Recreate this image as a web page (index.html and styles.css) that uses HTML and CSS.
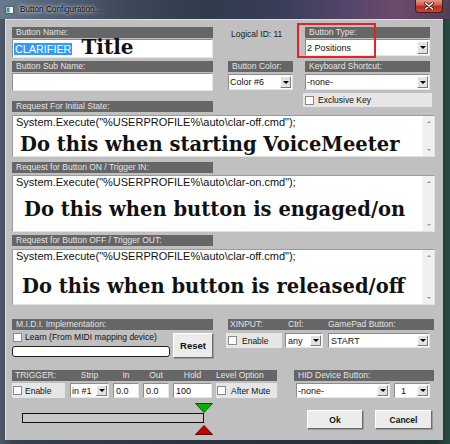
FILE: index.html
```html
<!DOCTYPE html>
<html>
<head>
<meta charset="utf-8">
<title>Button Configuration</title>
<link rel="stylesheet" href="styles.css">
</head>
<body>
<div class="window">
  <div class="titlebar">
    <svg class="app-icon" width="9" height="8" viewBox="0 0 9 8"><rect x="0.5" y="0.5" width="8" height="7" fill="#f2f2f2" stroke="#56606c"/><rect x="1.5" y="1.5" width="3" height="5" fill="#3a9c84"/></svg>
    <span class="title">Button Configuration...</span>
    <div class="close"><svg width="10" height="8" viewBox="0 0 10 8"><path d="M1.5 1 L8.5 7 M8.5 1 L1.5 7" stroke="#4a1010" stroke-width="3" stroke-linecap="round"/><path d="M1.5 1 L8.5 7 M8.5 1 L1.5 7" stroke="#ffffff" stroke-width="1.6" stroke-linecap="round"/></svg></div>
  </div>
  <div class="client">
    <div class="highlight"></div>
    <div class="top-grid">
      <div class="hdr g-name-h">Button Name:</div>
      <div class="field g-name"><span class="selected">CLARIFIER</span><span class="annot-title">Title</span></div>
      <div class="logical">Logical ID: 11</div>
      <div class="hdr g-type-h">Button Type:</div>
      <div class="select g-type"><span class="val">2 Positions</span><span class="drop"></span></div>
      <div class="hdr g-sub-h">Button Sub Name:</div>
      <div class="field g-sub"></div>
      <div class="hdr g-color-h">Button Color:</div>
      <div class="select g-color"><span class="val">Color #6</span><span class="drop"></span></div>
      <div class="hdr g-kb-h">Keyboard Shortcut:</div>
      <div class="select g-kb"><span class="val">-none-</span><span class="drop"></span></div>
      <div class="chk-cell g-excl"><span class="cb"></span>Exclusive Key</div>
      <div class="hdr g-req-h">Request For Initial State:</div>
    </div>

    <div class="textbox tb1">
      <div class="tb-content">
        <div class="cmd">System.Execute("%USERPROFILE%\auto\clar-off.cmd");</div>
        <div class="annot a1">Do this when starting VoiceMeeter</div>
      </div>
      <div class="scrollbar"><span class="sb-up"></span><span class="sb-down"></span></div>
    </div>

    <div class="hdr req-h h2">Request for Button ON / Trigger IN:</div>
    <div class="textbox tb2">
      <div class="tb-content">
        <div class="cmd">System.Execute("%USERPROFILE%\auto\clar-on.cmd");</div>
        <div class="annot a2">Do this when button is engaged/on</div>
      </div>
      <div class="scrollbar"><span class="sb-up"></span><span class="sb-down"></span></div>
    </div>

    <div class="hdr req-h h3">Request for Button OFF / Trigger OUT:</div>
    <div class="textbox tb3">
      <div class="tb-content">
        <div class="cmd">System.Execute("%USERPROFILE%\auto\clar-off.cmd");</div>
        <div class="annot a3">Do this when button is released/off</div>
      </div>
      <div class="scrollbar"><span class="sb-up"></span><span class="sb-down"></span></div>
    </div>

    <div class="row-b1">
      <div class="midi">
        <div class="hdr">M.I.D.I. Implementation:</div>
        <div class="midi-body">
          <div class="learn">
            <div class="learn-row"><span class="cb"></span>Learn (From MIDI mapping device)</div>
            <div class="learn-input"></div>
          </div>
          <div class="btn reset">Reset</div>
        </div>
      </div>
      <div class="xinput">
        <div class="hdr split"><span class="x1">XINPUT:</span><span class="x2">Ctrl:</span><span class="x3">GamePad Button:</span></div>
        <div class="xrow">
          <div class="chk-cell x-en"><span class="cb"></span>Enable</div>
          <div class="select x-any"><span class="val">any</span><span class="drop"></span></div>
          <div class="select x-start"><span class="val">START</span><span class="drop"></span></div>
        </div>
      </div>
    </div>

    <div class="row-b2">
      <div class="trigger">
        <div class="hdr split">
          <span class="c-en t-left">TRIGGER:</span>
          <span class="c-strip">Strip</span>
          <span class="c-num">In</span>
          <span class="c-num">Out</span>
          <span class="c-hold">Hold</span>
          <span class="c-after">Level Option</span>
        </div>
        <div class="trow">
          <div class="chk-cell c-en"><span class="cb"></span>Enable</div>
          <div class="select c-strip"><span class="val">in #1</span><span class="drop"></span></div>
          <div class="input c-num">0.0</div>
          <div class="input c-num">0.0</div>
          <div class="input c-hold">100</div>
          <div class="chk-cell c-after"><span class="cb"></span>After Mute</div>
        </div>
        <div class="slider">
          <svg class="tri" width="18" height="10" viewBox="0 0 18 10"><polygon points="0.5,0.5 17.5,0.5 9,9.5" fill="#00b400" stroke="#005a00" stroke-width="1"/></svg>
          <div class="bar"></div>
          <svg class="tri tri-up" width="18" height="10" viewBox="0 0 18 10"><polygon points="9,0.5 17.5,9.5 0.5,9.5" fill="#c80000" stroke="#5a0000" stroke-width="1"/></svg>
        </div>
      </div>
      <div class="hid">
        <div class="hdr">HID Device Button:</div>
        <div class="hrow">
          <div class="select h-none"><span class="val">-none-</span><span class="drop"></span></div>
          <div class="select h-one"><span class="val">1</span><span class="drop"></span></div>
        </div>
        <div class="btns">
          <div class="btn ok">Ok</div>
          <div class="btn cancel">Cancel</div>
        </div>
      </div>
    </div>
  </div>
</div>
</body>
</html>
```

FILE: styles.css
```css
* { box-sizing: border-box; }
html, body { margin: 0; padding: 0; }
body {
  font-family: "Liberation Sans", Arial, sans-serif;
  font-size: 8.5px;
  color: #111;
  background: #fff;
}

.window {
  width: 450px;
  height: 444px;
  display: flex;
  flex-direction: column;
  background: linear-gradient(90deg, #4d5969 0%, #38424f 3%, #2c343f 40%, #2a3039 85%, #1d3833 97%, #294a43 100%);
}

.titlebar {
  height: 19px;
  flex: none;
  display: flex;
  align-items: center;
  padding-left: 5px;
  background: linear-gradient(90deg, #6a7a8d 0%, #55647a 10%, #3d4858 28%, #303b4c 45%, #3a3d58 62%, #56456a 78%, #6d4a6c 88%, #503f58 100%);
}
.app-icon { margin-right: 6px; flex: none; }
.title {
  font-size: 8.2px;
  color: #0a0a0a;
  text-shadow: 0 0 5px rgba(255,255,255,0.85), 0 0 3px rgba(255,255,255,0.7);
}
.close {
  margin-left: auto;
  margin-right: 7px;
  align-self: flex-start;
  width: 28px;
  height: 13px;
  border: 1px solid #4a1a1a;
  border-top: none;
  border-radius: 0 0 4px 4px;
  background: linear-gradient(180deg, #e4988a 0%, #d2604e 40%, #b8301f 55%, #c84a34 100%);
  display: flex;
  align-items: center;
  justify-content: center;
}

.client {
  flex: 1;
  margin: 0 7px 4px 5px;
  background: #c0c0c0;
  position: relative;
  padding: 8px 0 0 7px;
  box-shadow: inset 1px 1px 0 #dedede;
}

.highlight {
  position: absolute;
  left: 292px;
  top: 4px;
  width: 79px;
  height: 35px;
  border: 2px solid #e5222b;
}

/* headers */
.hdr {
  background: #666666;
  color: #e4e4e4;
  height: 11px;
  line-height: 11px;
  padding-left: 4px;
  white-space: nowrap;
  font-size: 8.5px;
}
.hdr.split { display: flex; padding-left: 0; }

/* top grid */
.top-grid {
  display: grid;
  grid-template-columns: 216px 77px 125px;
  grid-template-rows: 11px 20px 14px 19px 10px 11px;
}
.g-name-h { grid-column: 1; grid-row: 1; width: 201px; }
.g-name { grid-column: 1; grid-row: 2; width: 201px; margin-top: 1px; height: 19px; }
.logical { grid-column: 2; grid-row: 1 / 3; padding-left: 3px; margin-top: 2px; line-height: 10px; color: #1a1a1a; }
.g-type-h { grid-column: 3; grid-row: 1; }
.g-type { grid-column: 3; grid-row: 2; margin-top: 1px; height: 17px; }
.g-sub-h { grid-column: 1; grid-row: 3; align-self: end; width: 201px; }
.g-sub { grid-column: 1; grid-row: 4; margin-top: 1px; height: 18px; width: 201px; }
.g-color-h { grid-column: 2; grid-row: 3; align-self: end; width: 65px; }
.g-color { grid-column: 2; grid-row: 4; margin-top: 2px; height: 16px; width: 65px; }
.g-kb-h { grid-column: 3; grid-row: 3; align-self: end; }
.g-kb { grid-column: 3; grid-row: 4; margin-top: 2px; height: 16px; }
.g-excl { grid-column: 3; grid-row: 5 / 7; margin-top: 2px; height: 14px; width: 129px; margin-left: -2px; align-self: start; }
.g-req-h { grid-column: 1; grid-row: 6; width: 201px; }

/* fields */
.field {
  background: #fff;
  border: 1px solid;
  border-color: #8c8c8c #e6e6e6 #e6e6e6 #8c8c8c;
  display: flex;
  align-items: center;
  padding-left: 1px;
}
.selected {
  background: #3399ff;
  color: #fff;
  font-size: 10.8px;
  line-height: 12px;
  padding: 0 1px;
}
.annot-title {
  font-family: "DejaVu Serif", "Liberation Serif", serif;
  font-weight: bold;
  font-size: 20px;
  line-height: 20px;
  height: 20px;
  margin-left: 9px;
  margin-top: -4px;
  color: #111;
}

.select {
  background: #fff;
  border: 1px solid;
  border-color: #8c8c8c #e6e6e6 #e6e6e6 #8c8c8c;
  display: flex;
  align-items: center;
  font-size: 9px;
  padding-left: 1px;
}
.select .val { flex: 1; white-space: nowrap; overflow: hidden; }
.drop {
  width: 11px;
  align-self: stretch;
  margin: 1px;
  background: #e2e2e2;
  border: 1px solid;
  border-color: #ffffff #7a7a7a #7a7a7a #ffffff;
  display: flex;
  align-items: center;
  justify-content: center;
}
.drop::after {
  content: "";
  border-left: 3px solid transparent;
  border-right: 3px solid transparent;
  border-top: 3px solid #000;
}

.chk-cell {
  background: #e6e6e6;
  display: flex;
  align-items: center;
  white-space: nowrap;
}
.cb {
  width: 9px;
  height: 9px;
  background: #fff;
  border: 1px solid #8a8a8a;
  margin-left: 2px;
  margin-right: 4px;
  flex: none;
}

/* textboxes */
.textbox {
  width: 423px;
  background: #fff;
  border: 1px solid;
  border-color: #9a9a9a #e2e2e2 #e2e2e2 #9a9a9a;
  display: flex;
  overflow: hidden;
}
.tb1 { margin-top: 3px; height: 42px; }
.tb2 { margin-top: 2px; height: 57px; }
.tb3 { margin-top: 3px; height: 56px; }
.req-h { width: 201px; }
.h2 { margin-top: 5px; }
.h3 { margin-top: 3px; }
.tb-content {
  flex: 1;
  padding: 0 3px;
  font-size: 11px;
  line-height: 12px;
  white-space: nowrap;
  overflow: hidden;
}
.annot {
  font-family: "DejaVu Serif", "Liberation Serif", serif;
  font-weight: bold;
  font-size: 19.5px;
  line-height: 19.5px;
  color: #111;
}
.a1 { margin-top: 7px; margin-left: 4px; }
.a2 { margin-top: 12px; margin-left: 8px; }
.a3 { margin-top: 15px; margin-left: 6px; }
.scrollbar {
  width: 12px;
  flex: none;
  background: #f0f0f0;
  border-left: 1px solid #f6f6f6;
  display: flex;
  flex-direction: column;
  justify-content: space-between;
  align-items: center;
  padding: 5px 0;
}
.sb-up {
  border-left: 2px solid transparent;
  border-right: 2px solid transparent;
  border-bottom: 2px solid #9a9a9a;
}
.sb-down {
  border-left: 2px solid transparent;
  border-right: 2px solid transparent;
  border-top: 2px solid #9a9a9a;
}

/* bottom rows */
.row-b1 { display: flex; margin-top: 14px; }
.midi { width: 201px; }
.midi-body { display: flex; }
.learn { width: 158px; }
.learn-row { height: 14px; display: flex; align-items: center; white-space: nowrap; }
.learn-row .cb { margin-left: 1px; margin-right: 3px; }
.learn-input {
  margin-top: 2px;
  height: 11px;
  background: #fff;
  border: 1px solid #222;
  border-radius: 3px;
}
.btn {
  background: #ececec;
  border: 1px solid;
  border-color: #ffffff #6c6c6c #6c6c6c #ffffff;
  box-shadow: 1px 1px 0 #9a9a9a;
  display: flex;
  align-items: center;
  justify-content: center;
  font-weight: bold;
  color: #111;
}
.reset { margin-left: 3px; margin-top: 3px; width: 40px; height: 25px; font-size: 9.5px; }

.xinput { margin-left: 15px; width: 206px; }
.x1 { width: 60px; padding-left: 2px; }
.x2 { width: 40px; }
.xrow { display: flex; margin-top: 3px; height: 15px; }
.x-en { margin-left: -2px; width: 56px; }
.x-en .cb { margin-left: 2px; margin-right: 5px; }
.x-any { margin-left: 3px; width: 38px; padding-left: 2px; }
.x-start { margin-left: 5px; width: 102px; padding-left: 2px; }

.row-b2 { display: flex; margin-top: 12px; }
.trigger { width: 265px; }
.trigger .hdr span { text-align: center; }
.trigger .hdr .t-left { text-align: left; padding-left: 3px; }
.trigger .hdr .c-after { text-align: left; }
.trow { display: flex; margin-top: 2px; height: 15px; }
.c-en { width: 53px; }
.c-en .cb { margin-left: 1px; margin-right: 3px; }
.c-strip { width: 39px; margin-left: 5px; }
.c-num { width: 26px; margin-left: 4px; }
.c-hold { width: 39px; margin-left: 4px; }
.c-after { width: 61px; margin-left: 4px; }
.trow .c-after .cb { margin-left: 1px; margin-right: 5px; }
.input {
  background: #fff;
  border: 1px solid;
  border-color: #8c8c8c #e6e6e6 #e6e6e6 #8c8c8c;
  font-size: 9px;
  display: flex;
  align-items: center;
  padding-left: 2px;
}
.slider { margin-top: 5px; padding-left: 10px; }
.tri { display: block; margin-left: 178px; width: 18px; height: 10px; margin-left: 173px; }
.tri-up { margin-top: 2px; }
.bar {
  width: 182px;
  height: 10px;
  background: #c8c8c8;
  border: 1px solid #111;
}

.hid { margin-left: 17px; width: 140px; }
.hrow { display: flex; margin-top: 2px; height: 15px; }
.h-none { margin-left: 2px; width: 94px; }
.h-one { margin-left: 4px; width: 36px; padding-left: 6px; }
.btns { display: flex; margin-top: 12px; }
.ok { margin-left: 13px; width: 56px; height: 19px; font-size: 8.5px; }
.cancel { margin-left: 12px; width: 57px; height: 19px; font-size: 8.5px; }
```
